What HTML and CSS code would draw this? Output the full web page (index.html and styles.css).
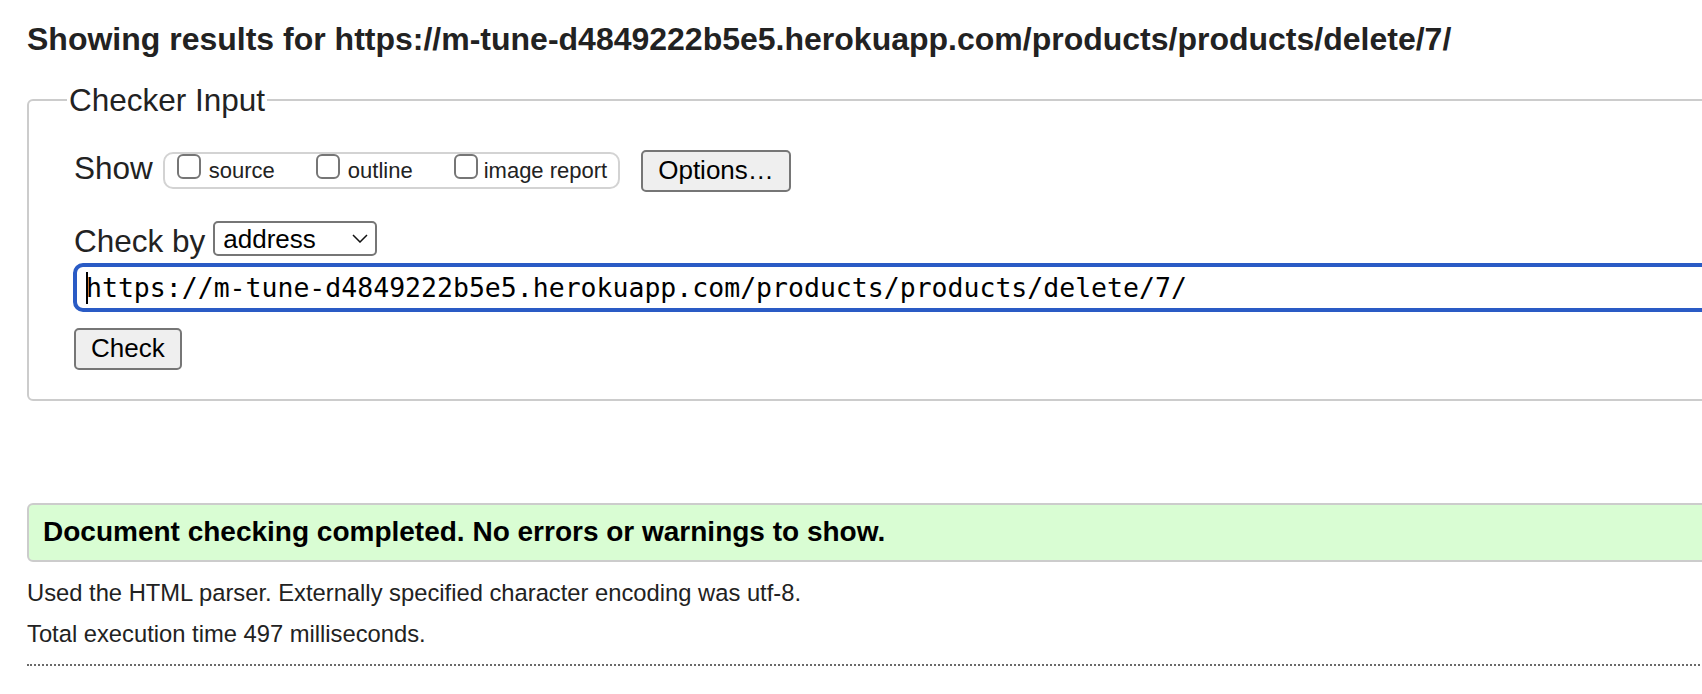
FILE: index.html
```html
<!DOCTYPE html>
<html lang="en">
<head>
<meta charset="utf-8">
<title>Showing results for https://m-tune-d4849222b5e5.herokuapp.com/products/products/delete/7/</title>
<link rel="stylesheet" href="styles.css">
</head>
<body>
<main class="page">
  <h2 class="title">Showing results for https://m-tune-d4849222b5e5.herokuapp.com/products/products/delete/7/</h2>
  <form class="checker">
    <fieldset class="checker-box">
      <legend class="checker-legend">Checker Input</legend>
      <div class="row row-show">
        <span class="row-label">Show</span>
        <div class="show-group">
          <label class="opt"><input type="checkbox" class="cb"><span>source</span></label>
          <label class="opt"><input type="checkbox" class="cb"><span>outline</span></label>
          <label class="opt opt-last"><input type="checkbox" class="cb"><span>image report</span></label>
        </div>
        <button type="button" class="btn btn-options">Options…</button>
      </div>
      <div class="row row-by">
        <span class="row-label label-by">Check by</span>
        <span class="select-wrap">
          <select class="select"><option>address</option></select>
          <svg class="chev" width="16" height="9" viewBox="0 0 16 9"><polyline points="1,1 8,8 15,1" fill="none" stroke="#111" stroke-width="1.5"/></svg>
        </span>
      </div>
      <div class="url-wrap">
        <input class="url" type="text" value="https://m-tune-d4849222b5e5.herokuapp.com/products/products/delete/7/">
        <span class="caret"></span>
      </div>
      <div class="row row-check">
        <button type="button" class="btn btn-check">Check</button>
      </div>
    </fieldset>
  </form>
  <div class="success"><p>Document checking completed. No errors or warnings to show.</p></div>
  <p class="note note-first">Used the HTML parser. Externally specified character encoding was utf-8.</p>
  <p class="note">Total execution time 497 milliseconds.</p>
  <hr class="dotted">
</main>
</body>
</html>
```

FILE: styles.css
```css
html {
  overflow: hidden;
}
body {
  margin: 0;
  background: #fff;
  color: #222;
  font-family: "Liberation Sans", Arial, sans-serif;
}
.page {
  width: 1760px;
  padding: 21px 0 0 27px;
}
.title {
  margin: 0;
  font-size: 32px;
  line-height: 36px;
  font-weight: bold;
  color: #222;
  white-space: nowrap;
}
.checker {
  margin: 25px 0 0;
}
.checker-box {
  margin: 0;
  min-width: 0;
  border: 2px solid #ccc;
  border-radius: 6px;
  padding: 32px 0 29px 45px;
}
.checker-legend {
  padding: 0 2px;
  margin-left: -7px;
  font-size: 31.5px;
  line-height: 36px;
}
.row {
  display: flex;
  align-items: flex-start;
}
.row-label {
  font-size: 31.5px;
  line-height: 36px;
}
.show-group {
  display: flex;
  gap: 41px;
  box-sizing: border-box;
  height: 37px;
  margin: 2px 0 0 10px;
  padding: 0 11px 0 12px;
  border: 2px solid #d3d3d3;
  border-radius: 10px;
}
.opt {
  display: flex;
  align-items: flex-start;
  font-size: 22px;
  line-height: 33px;
}
.cb {
  appearance: none;
  -webkit-appearance: none;
  width: 24px;
  height: 25px;
  margin: 0 8px 0 0;
  border: 2px solid #767676;
  border-radius: 6px;
  background: #fff;
}
.opt-last .cb {
  margin-right: 6px;
}
.btn {
  font-family: "Liberation Sans", Arial, sans-serif;
  font-size: 26px;
  line-height: 30px;
  padding: 3px 15px 5px;
  border: 2px solid #767676;
  border-radius: 5px;
  background: #efefef;
  color: #000;
}
.btn-options {
  margin-left: 21px;
}
.row-by {
  margin-top: 29px;
}
.label-by {
  margin-top: 2px;
}
.select-wrap {
  display: inline-flex;
  align-items: center;
  box-sizing: border-box;
  width: 164px;
  height: 35px;
  margin-left: 8px;
  border: 2px solid #767676;
  border-radius: 5px;
  background: #fff;
}
.select {
  appearance: none;
  -webkit-appearance: none;
  flex: 1;
  min-width: 0;
  height: 100%;
  padding: 0 0 0 8px;
  border: 0;
  background: transparent;
  color: #000;
  font-family: "Liberation Sans", Arial, sans-serif;
  font-size: 26px;
  outline: none;
}
.chev {
  margin-right: 7px;
}
.url-wrap {
  position: relative;
  margin: 4px 0 0 -1px;
}
.url {
  display: block;
  box-sizing: border-box;
  width: 1700px;
  height: 49px;
  padding: 0 0 0 9px;
  border: 4px solid #2a5bc5;
  border-radius: 10px;
  outline: none;
  background: #fff;
  color: #000;
  font-family: "DejaVu Sans Mono", monospace;
  font-size: 26.5px;
}
.caret {
  position: absolute;
  left: 13px;
  top: 9px;
  width: 2px;
  height: 32px;
  background: #000;
}
.row-check {
  margin-top: 16px;
}
.success {
  margin-top: 102px;
  padding: 11px 14px 12px;
  border: 2px solid #ccc;
  border-radius: 6px;
  background: #d9fdd3;
}
.success p {
  margin: 0;
  color: #000;
  font-size: 28px;
  line-height: 32px;
  font-weight: bold;
}
.note {
  margin: 13px 0 0;
  font-size: 23.75px;
  line-height: 28px;
}
.note-first {
  margin-top: 17px;
}
.dotted {
  height: 0;
  margin: 16px 0 0;
  border: 0;
  border-top: 2px dotted #6a6a6a;
}
```
